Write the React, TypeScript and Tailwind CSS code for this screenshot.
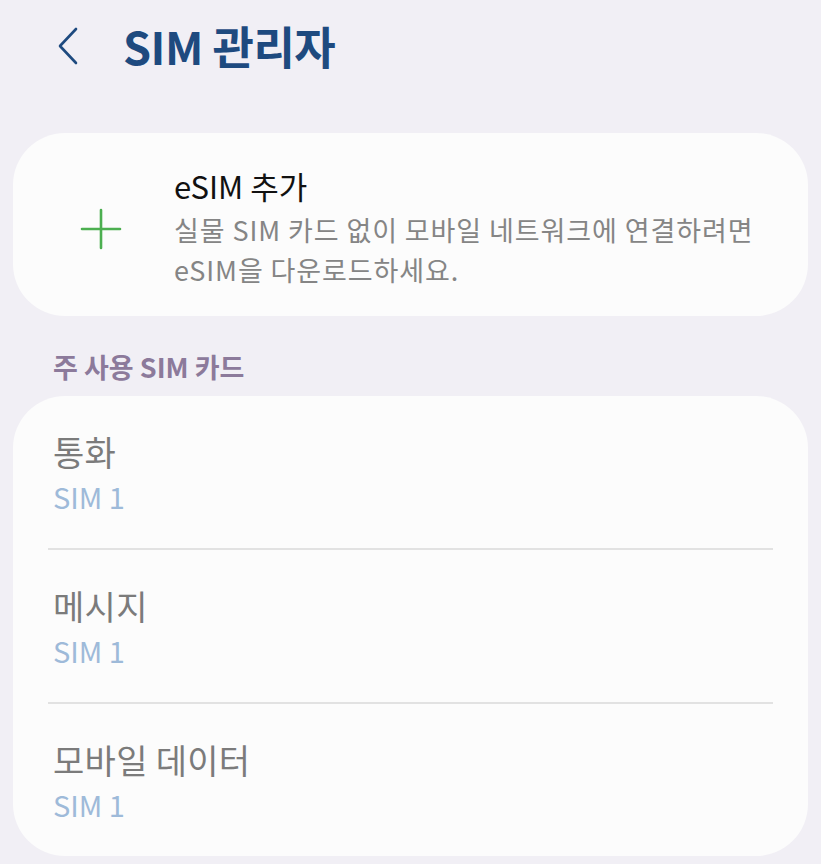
const font = {
  fontFamily: '"Noto Sans CJK KR", "Noto Sans", sans-serif',
};

const rows = [
  { title: '통화', sim: 'SIM 1' },
  { title: '메시지', sim: 'SIM 1' },
  { title: '모바일 데이터', sim: 'SIM 1' },
];

function Chevron() {
  return (
    <svg width="24" height="40" viewBox="0 0 24 40" fill="none">
      <path d="M20 3 L4 20 L20 37" stroke="#1e4a7f" strokeWidth="2.6" strokeLinecap="round" strokeLinejoin="round" />
    </svg>
  );
}

function Plus() {
  return (
    <svg width="42" height="42" viewBox="0 0 42 42" fill="none">
      <path d="M21 2 V40 M2 21 H40" stroke="#4caf50" strokeWidth="2.6" strokeLinecap="round" />
    </svg>
  );
}

export default function App() {
  return (
    <div className="min-h-screen w-full bg-[#f1eff5] pb-[12px]" style={font}>
      <header className="flex h-[96px] items-center">
        <div className="ml-[56px] mt-[-4px] flex items-center">
          <Chevron />
        </div>
        <h1 className="ml-[43px] mt-[-6px] text-[45px] font-bold leading-none tracking-[-0.5px] text-[#1e4a7f]">
          SIM 관리자
        </h1>
      </header>

      <section className="mx-[13px] mt-[37px] flex h-[183px] items-center rounded-[52px] bg-[#fcfcfc]">
        <div className="ml-[67px] mt-[8px] flex items-center">
          <Plus />
        </div>
        <div className="ml-[52px] mt-[6px] flex flex-col">
          <div className="text-[31px] leading-[40px] text-[#111111]">eSIM 추가</div>
          <div className="mt-[4px] text-[27px] leading-[40px] tracking-[0.9px] text-[#858585]">
            실물 SIM 카드 없이 모바일 네트워크에 연결하려면
            <br />
            eSIM을 다운로드하세요.
          </div>
        </div>
      </section>

      <div className="ml-[53px] mt-[34px] h-[46px] text-[27px] font-bold leading-[34px] text-[#8c7a9b]">
        주 사용 SIM 카드
      </div>

      <section className="mx-[13px] flex flex-col rounded-[52px] bg-[#fcfcfc]">
        {rows.map((row, i) => (
          <div key={row.title}>
            {i > 0 && <div className="mx-[35px] h-[2px] bg-[#e2e2e2]" />}
            <div className="flex h-[152px] flex-col justify-start px-[40px] pt-[36px]">
              <div className="text-[34px] leading-[40px] tracking-[0.3px] text-[#7b7b7b]">{row.title}</div>
              <div className="mt-[6px] text-[29px] leading-[36px] text-[#9ebad9]">{row.sim}</div>
            </div>
          </div>
        ))}
      </section>
    </div>
  );
}
